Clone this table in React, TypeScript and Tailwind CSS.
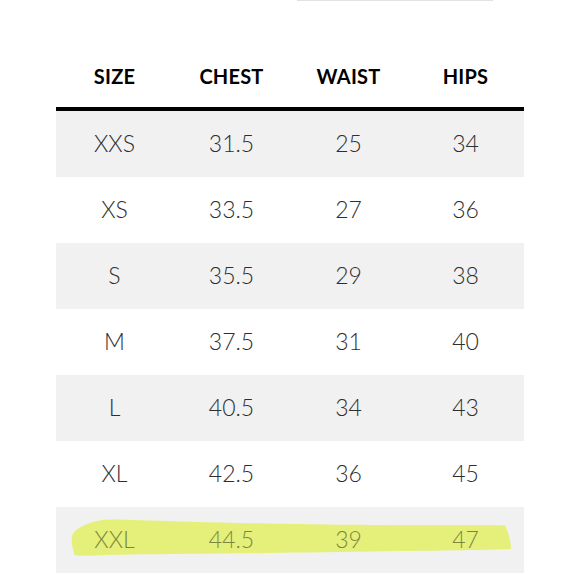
import React from "react";

const rows: [string, string, string, string][] = [
  ["XXS", "31.5", "25", "34"],
  ["XS", "33.5", "27", "36"],
  ["S", "35.5", "29", "38"],
  ["M", "37.5", "31", "40"],
  ["L", "40.5", "34", "43"],
  ["XL", "42.5", "36", "45"],
  ["XXL", "44.5", "39", "47"],
];

const headers = ["SIZE", "CHEST", "WAIST", "HIPS"];

const Highlight = () => (
  <svg
    className="absolute left-[15px] top-[10px] w-[442px] h-[42px]"
    viewBox="0 0 442 42"
    preserveAspectRatio="none"
  >
    <path
      d="M1 20 C2 13 10 9 22 5 C30 2 42 2 62 3 C120 5 200 7 300 8 C360 8.5 410 8 434 8.5 C438 16 440 26 440 32 C420 33 380 33.5 300 34.5 C200 36 120 37 60 37.5 C30 38 12 39 4 38.5 C2 33 0 26 1 20 Z"
      fill="#e4f07a"
    />
  </svg>
);

const App = () => {
  return (
    <div className="w-[580px] h-[580px] bg-white overflow-hidden font-['Lato',sans-serif]">
      <div className="ml-[297px] w-[196px] h-[1px] bg-[#e2e2e2]" />
      <div className="mx-[56px] pt-[61px] pb-[17px] grid grid-cols-4 text-center text-[20px] leading-[28px] font-bold text-black tracking-[0.01em]">
        {headers.map((h) => (
          <div key={h}>{h}</div>
        ))}
      </div>
      <div className="mx-[56px] h-[4px] bg-black" />
      <div className="mx-[56px]">
        {rows.map((r, i) => {
          const last = i === rows.length - 1;
          return (
            <div
              key={r[0]}
              className={`relative grid grid-cols-4 h-[66px] items-center text-center text-[23px] leading-[28px] font-light ${
                i % 2 === 0 ? "bg-[#f1f1f1]" : "bg-white"
              } ${last ? "text-[#7d873c]" : "text-[#2e2e2e]"}`}
            >
              {last && <Highlight />}
              {r.map((c, j) => (
                <div key={j} className="relative pb-[2px]">
                  {c}
                </div>
              ))}
            </div>
          );
        })}
      </div>
    </div>
  );
};

export default App;
